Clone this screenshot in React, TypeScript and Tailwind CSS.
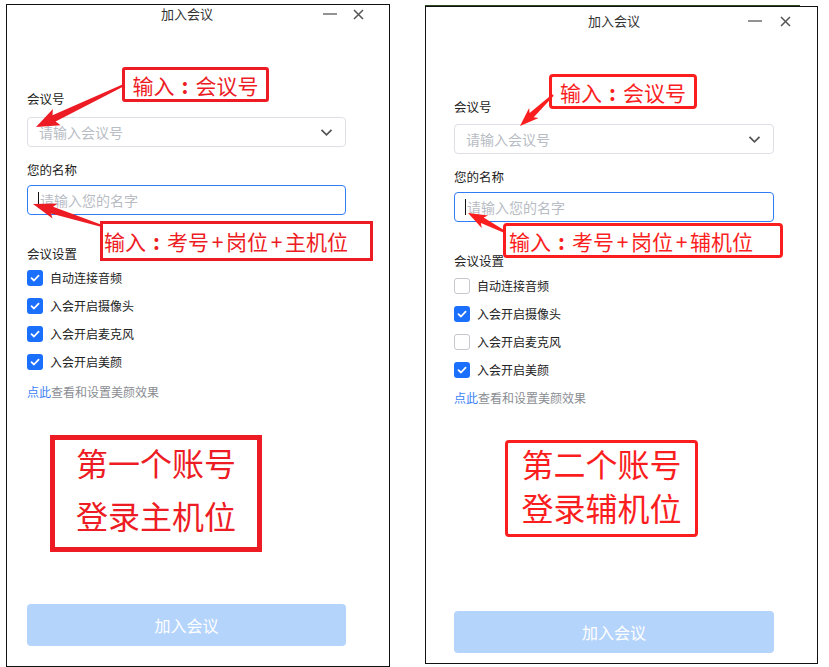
import React from "react";

const FONT = { fontFamily: '"Noto Sans CJK SC", "Noto Sans", sans-serif' };

function arrowPoints(tx: number, ty: number, px: number, py: number, head = 20, hw = 9, tw0 = 1, tw1 = 3.5) {
  const dx = px - tx;
  const dy = py - ty;
  const len = Math.hypot(dx, dy);
  const ux = dx / len;
  const uy = dy / len;
  const nx = -uy;
  const ny = ux;
  const bx = px - ux * head;
  const by = py - uy * head;
  const pts: [number, number][] = [
    [tx + nx * tw0, ty + ny * tw0],
    [bx + nx * tw1, by + ny * tw1],
    [bx + nx * hw - ux * 3, by + ny * hw - uy * 3],
    [px, py],
    [bx - nx * hw - ux * 3, by - ny * hw - uy * 3],
    [bx - nx * tw1, by - ny * tw1],
    [tx - nx * tw0, ty - ny * tw0],
  ];
  return pts.map((p) => `${p[0].toFixed(1)},${p[1].toFixed(1)}`).join(" ");
}

function Check({ checked }: { checked: boolean }) {
  if (!checked) {
    return <div className="w-[16px] h-[16px] rounded-[3px] border border-[#c5c8ce] bg-white" />;
  }
  return (
    <div className="w-[16px] h-[16px] rounded-[3px] bg-[#1a6ffd] flex items-center justify-center">
      <svg width="12" height="12" viewBox="0 0 12 12">
        <path d="M2.5 6.2 L5 8.5 L9.6 3.6" fill="none" stroke="#fff" strokeWidth="1.8" strokeLinecap="round" strokeLinejoin="round" />
      </svg>
    </div>
  );
}

function TitleBar({ titleClass, ctrlClass }: { titleClass: string; ctrlClass: string }) {
  return (
    <div className={titleClass}>
      <span className="text-[13px] leading-[18px] text-[#333]">加入会议</span>
      <div className={ctrlClass}>
        <svg width="14" height="10" viewBox="0 0 14 10">
          <path d="M0 5 H14" stroke="#777" strokeWidth="1.6" />
        </svg>
        <svg width="11" height="11" viewBox="0 0 11 11">
          <path d="M1 1 L10 10 M10 1 L1 10" stroke="#555" strokeWidth="1.5" />
        </svg>
      </div>
    </div>
  );
}

function Row({ checked, label }: { checked: boolean; label: string }) {
  return (
    <div className="h-[28px] flex items-center gap-[7px]">
      <Check checked={checked} />
      <span className="text-[12px] text-[#222] leading-[16px]">{label}</span>
    </div>
  );
}

function Panel({
  outer,
  title,
  ctrl,
  inner,
  labelMt,
  selectMt,
  nameMt,
  inputMt,
  settingMt,
  rowsMt,
  linkMt,
  btnMb,
  w,
  checks,
}: {
  outer: string;
  title: string;
  ctrl: string;
  inner: string;
  labelMt: string;
  selectMt: string;
  nameMt: string;
  inputMt: string;
  settingMt: string;
  rowsMt: string;
  linkMt: string;
  btnMb: string;
  w: string;
  checks: boolean[];
}) {
  const labels = ["自动连接音频", "入会开启摄像头", "入会开启麦克风", "入会开启美颜"];
  return (
    <div className={outer}>
      <TitleBar titleClass={title} ctrlClass={ctrl} />
      <div className={inner}>
        <div className={labelMt + " text-[12.5px] leading-[16px] text-[#222]"}>会议号</div>
        <div className={selectMt + " " + w + " h-[30px] rounded-[4px] border border-[#dcdfe6] flex items-center pl-[11px] pr-[12px]"}>
          <span className="text-[14px] text-[#b8bcc4] leading-[18px] flex-1">请输入会议号</span>
          <svg width="13" height="9" viewBox="0 0 13 9">
            <path d="M1.5 1.8 L6.5 6.8 L11.5 1.8" fill="none" stroke="#555" strokeWidth="1.8" />
          </svg>
        </div>
        <div className={nameMt + " text-[12.5px] leading-[16px] text-[#222]"}>您的名称</div>
        <div className={inputMt + " " + w + " h-[30px] rounded-[4px] border border-[#2f7cf6] flex items-center pl-[10px]"}>
          <span className="w-[1px] h-[16px] bg-[#111] mr-[1px]" />
          <span className="text-[14px] text-[#b8bcc4] leading-[18px]">请输入您的名字</span>
        </div>
        <div className={settingMt + " text-[12.5px] leading-[16px] text-[#222]"}>会议设置</div>
        <div className={rowsMt + " flex flex-col"}>
          {labels.map((l, i) => (
            <Row key={l} checked={checks[i]} label={l} />
          ))}
        </div>
        <div className={linkMt + " text-[12px] leading-[16px] text-[#8a8d93]"}>
          <span className="text-[#3b7ff5]">点此</span>查看和设置美颜效果
        </div>
        <div className={"mt-auto " + btnMb + " " + w + " h-[42px] rounded-[4px] bg-[#b4d4fc] flex items-center justify-center text-white text-[16px]"}>
          加入会议
        </div>
      </div>
    </div>
  );
}

function Plus() {
  return <span className="inline-block w-[17px] text-center">+</span>;
}

function Colon() {
  return <span className="inline-block w-[21px] text-center font-bold">:</span>;
}

export default function App() {
  const L = "#ed1c24";
  const R = "#fb1e1e";
  return (
    <div className="relative w-[829px] h-[667px] overflow-hidden bg-white flex items-start" style={FONT}>
      <Panel
        outer="ml-[6px] mt-[4px] w-[384px] h-[663px] border border-[#111] flex flex-col"
        title="h-[18px] flex items-center pl-[154px]"
        ctrl="ml-auto mr-[25px] flex items-center gap-[16px]"
        inner="flex-1 flex flex-col pl-[20px]"
        labelMt="mt-[68px]"
        selectMt="mt-[10px]"
        nameMt="mt-[15px]"
        inputMt="mt-[7px]"
        settingMt="mt-[31px]"
        rowsMt="mt-[2px]"
        linkMt="mt-[8px]"
        btnMb="mb-[20px]"
        w="w-[319px]"
        checks={[true, true, true, true]}
      />
      <div className="relative">
        <div className="absolute left-[35px] top-[5px] w-[375px] h-[1px] bg-[#2d4a22]" />
      </div>
      <Panel
        outer="ml-[35px] mt-[6px] w-[393px] h-[658px] border border-[#111] flex flex-col"
        title="mt-[5px] h-[18px] flex items-center pl-[162px]"
        ctrl="ml-auto mr-[26px] flex items-center gap-[18px]"
        inner="flex-1 flex flex-col pl-[28px]"
        labelMt="mt-[69px]"
        selectMt="mt-[9px]"
        nameMt="mt-[15px]"
        inputMt="mt-[7px]"
        settingMt="mt-[31px]"
        rowsMt="mt-[3px]"
        linkMt="mt-[6px]"
        btnMb="mb-[10px]"
        w="w-[320px]"
        checks={[false, true, false, true]}
      />

      {/* Left annotations */}
      <div className="absolute left-[122px] top-[67px] w-[147px] h-[35px] border-[3px] rounded-[3px] flex items-center justify-center text-[21px] leading-[26px] whitespace-nowrap" style={{ borderColor: L, color: L }}>
        输入<Colon />会议号
      </div>
      <div className="absolute left-[100px] top-[221px] w-[273px] h-[40px] border-[3px] flex items-center pl-[1px] text-[21px] leading-[26px] whitespace-nowrap" style={{ borderColor: L, color: L }}>
        输入<Colon />考号<Plus />岗位<Plus />主机位
      </div>
      <div className="absolute left-[50px] top-[435px] w-[212px] h-[117px] border-[5px] flex flex-col items-center pt-[4px] gap-[17px] text-[32px] leading-[36px]" style={{ borderColor: L, color: L }}>
        <div>第一个账号</div>
        <div>登录主机位</div>
      </div>

      {/* Right annotations */}
      <div className="absolute left-[549px] top-[74px] w-[148px] h-[35px] border-[3px] rounded-[4px] flex items-center justify-center text-[21px] leading-[26px] whitespace-nowrap" style={{ borderColor: R, color: R }}>
        输入<Colon />会议号
      </div>
      <div className="absolute left-[503px] top-[223px] w-[280px] h-[35px] border-[3px] rounded-[4px] flex items-center pl-[3px] text-[21px] leading-[26px] whitespace-nowrap" style={{ borderColor: R, color: R }}>
        输入<Colon />考号<Plus />岗位<Plus />辅机位
      </div>
      <div className="absolute left-[505px] top-[440px] w-[193px] h-[97px] border-[3px] rounded-[4px] flex flex-col items-center pt-[2px] gap-[8px] text-[32px] leading-[36px]" style={{ borderColor: R, color: R }}>
        <div>第二个账号</div>
        <div>登录辅机位</div>
      </div>

      <svg className="absolute left-0 top-0 pointer-events-none" width="829" height="667">
        <polygon points={arrowPoints(124, 85, 36, 127, 20, 9, 1, 3.5)} fill={L} />
        <polygon points={arrowPoints(102, 226, 33, 204, 20, 8, 1, 3.5)} fill={L} />
        <polygon points={arrowPoints(553, 95, 520, 126, 16, 7, 1, 3)} fill={R} />
        <polygon points={arrowPoints(505, 232, 468, 213, 16, 7, 1, 3)} fill={R} />
      </svg>
    </div>
  );
}
